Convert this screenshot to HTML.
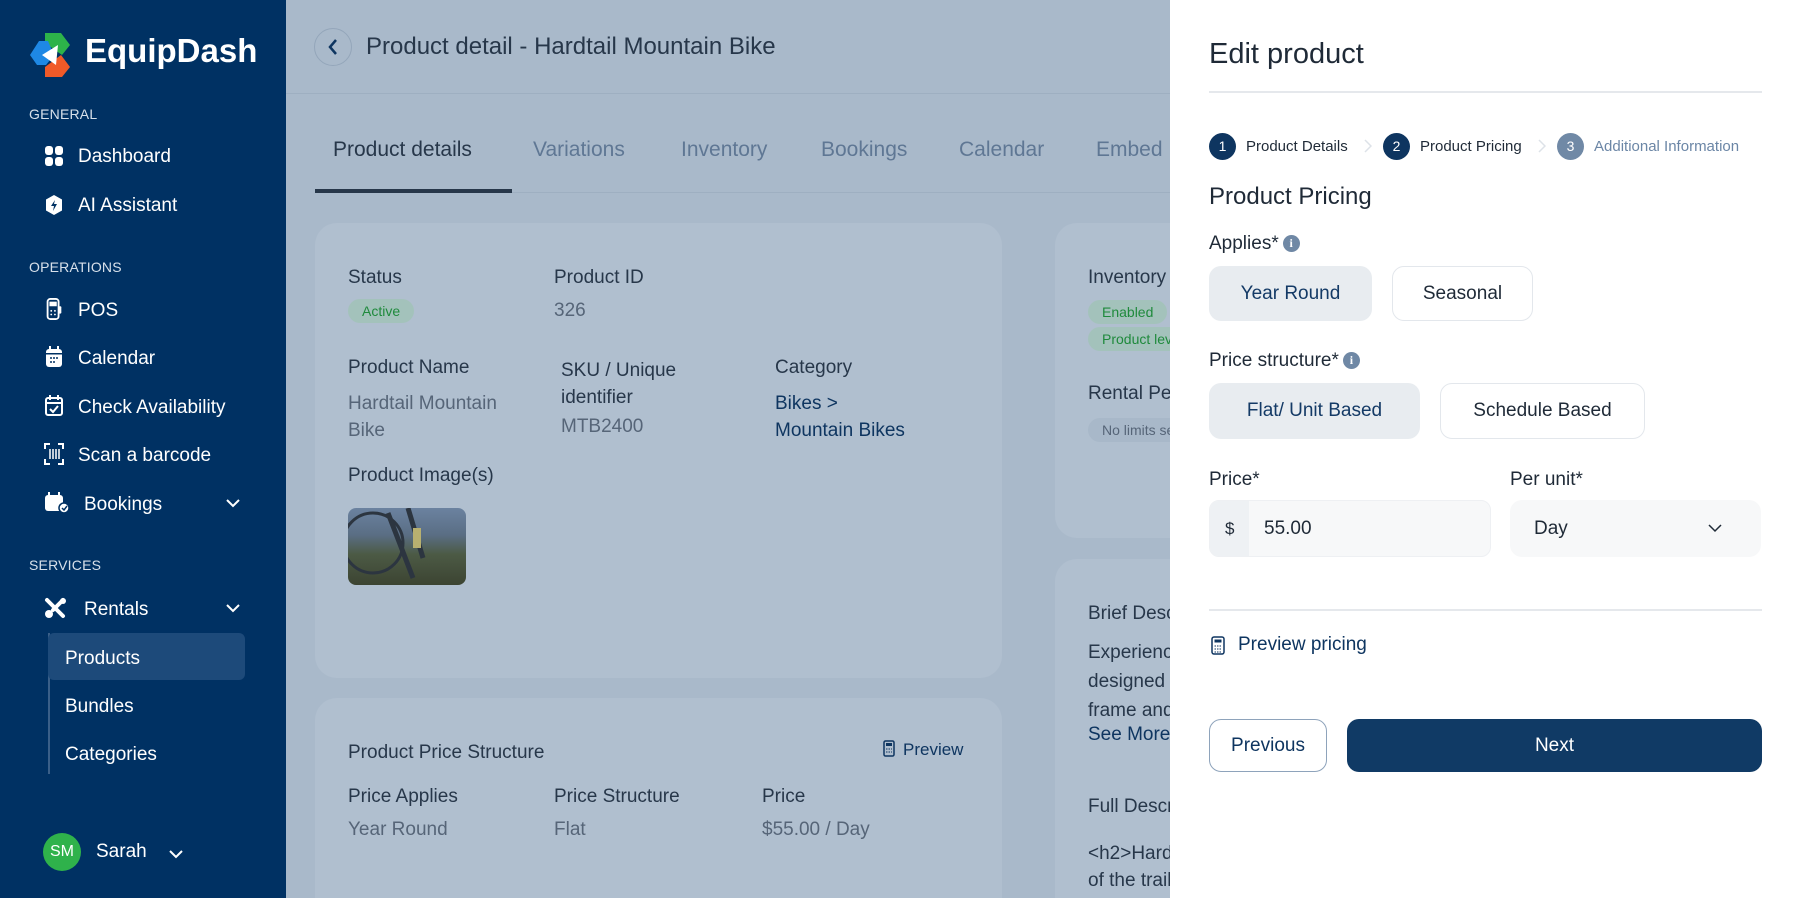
<!DOCTYPE html>
<html><head><meta charset="utf-8"><style>
*{box-sizing:border-box;margin:0;padding:0}
html{width:1800px;height:898px;overflow:hidden}
body{width:1800px;height:898px;overflow:hidden;font-family:"Liberation Sans",sans-serif;background:#a9b9ca;position:relative}
.abs{position:absolute;white-space:nowrap}
#sb{position:absolute;left:0;top:0;width:286px;height:898px;background:#003163;color:#fff}
.sec{position:absolute;left:29px;font-size:14px;color:#d7e0ea;letter-spacing:.2px}
.it{position:absolute;left:78px;font-size:19px;color:#fff}
.ic{position:absolute;left:44px;width:20px;height:22px}
#main{position:absolute;left:286px;top:0;width:884px;height:898px;color:#27374a;overflow:hidden}
.card{position:absolute;background:#b0bfcf;border-radius:22px}
.l{position:absolute;font-size:19px;color:#27374a;white-space:nowrap}
.v{position:absolute;font-size:19px;color:#566578;white-space:nowrap}
.tab{position:absolute;top:138px;font-size:21px;color:#5f7794}
.pill{position:absolute;background:#a3c2bb;color:#1f8a3c;font-size:14px;border-radius:12px;padding:4px 14px;white-space:nowrap}
#pn{position:absolute;left:1170px;top:0;width:630px;height:898px;background:#fff;color:#1f2a37}
.btn{position:absolute;border-radius:12px;font-size:19px;display:flex;align-items:center;justify-content:center}
.sel{background:#e8ecf0;color:#143a66}
.uns{background:#fff;border:1px solid #e3e7ec;color:#1f2a37}
.lab{position:absolute;font-size:19px;color:#1f2a37}
.info{display:inline-block;width:17px;height:17px;border-radius:50%;background:#6f88a5;color:#fff;font-size:12px;text-align:center;line-height:17px;font-weight:bold;vertical-align:2px;margin-left:4px;font-family:"Liberation Serif",serif}
.step{position:absolute;top:133px;width:27px;height:27px;border-radius:50%;background:#0e3560;color:#fff;font-size:14px;text-align:center;line-height:27px}
.stl{position:absolute;top:138px;font-size:15px;color:#1f2a37}
</style></head><body>
<div id="sb">
 <svg class="abs" style="left:28px;top:31px" width="46" height="48" viewBox="0 0 46 48"><polygon points="17,2 33,2 42,14 34,24 17,12" fill="#2db34a"/><polygon points="2,24 11,10 20,10 26,24 18,34 9,34" fill="#1e88e5"/><polygon points="17,36 33,24 42,36 34,46 17,46" fill="#f05a28"/><polygon points="14,24 30,14 28,34" fill="#fff"/></svg>
 <div class="abs" style="left:85px;top:32px;font-size:33px;font-weight:bold;color:#fff">EquipDash</div>
 <div class="sec" style="top:106px">GENERAL</div>
 <svg class="ic" style="top:145px" viewBox="0 0 20 22"><rect x="1" y="1" width="8" height="9" rx="3" fill="#fff"/><rect x="11" y="1" width="8" height="9" rx="3" fill="#fff"/><rect x="1" y="12" width="8" height="9" rx="3" fill="#fff"/><rect x="11" y="12" width="8" height="9" rx="3" fill="#fff"/></svg>
 <div class="it" style="top:146px">Dashboard</div>
 <svg class="ic" style="top:194px" viewBox="0 0 20 22"><polygon points="10,1 18,5.5 18,16.5 10,21 2,16.5 2,5.5" fill="#fff"/><path d="M11 6 L7 12 L10 12 L9 17 L13 10 L10 10Z" fill="#003163"/></svg>
 <div class="it" style="top:195px">AI Assistant</div>
 <div class="sec" style="top:259px">OPERATIONS</div>
 <svg class="ic" style="top:298px" viewBox="0 0 20 24"><rect x="3" y="1" width="12" height="22" rx="3" fill="none" stroke="#fff" stroke-width="2"/><rect x="5" y="4" width="8" height="5" fill="#fff"/><rect x="15" y="9" width="3" height="8" rx="1" fill="#fff"/><circle cx="7" cy="14" r="1" fill="#fff"/><circle cx="11" cy="14" r="1" fill="#fff"/><circle cx="7" cy="18" r="1" fill="#fff"/><circle cx="11" cy="18" r="1" fill="#fff"/></svg>
 <div class="it" style="top:300px">POS</div>
 <svg class="ic" style="top:346px" viewBox="0 0 20 22"><rect x="2" y="3" width="16" height="18" rx="3" fill="#fff"/><rect x="5" y="0" width="2" height="5" fill="#fff"/><rect x="13" y="0" width="2" height="5" fill="#fff"/><rect x="2" y="7" width="16" height="1.5" fill="#003163"/><circle cx="7" cy="12" r="1" fill="#003163"/><circle cx="10" cy="12" r="1" fill="#003163"/><circle cx="13" cy="12" r="1" fill="#003163"/><circle cx="7" cy="16" r="1" fill="#003163"/><circle cx="10" cy="16" r="1" fill="#003163"/></svg>
 <div class="it" style="top:348px">Calendar</div>
 <svg class="ic" style="top:395px" viewBox="0 0 20 22"><rect x="2" y="3" width="16" height="17" rx="2" fill="none" stroke="#fff" stroke-width="2"/><rect x="5" y="0" width="2" height="5" fill="#fff"/><rect x="13" y="0" width="2" height="5" fill="#fff"/><path d="M2 8H18" stroke="#fff" stroke-width="2"/><path d="M6 14 L9 17 L14 11" stroke="#fff" stroke-width="2" fill="none"/></svg>
 <div class="it" style="top:397px">Check Availability</div>
 <svg class="ic" style="top:443px" viewBox="0 0 20 22"><path d="M1 6V1H6M14 1H19V6M19 16V21H14M6 21H1V16" stroke="#fff" stroke-width="2" fill="none"/><path d="M6 6V16M9 6V16M12 6V16M15 6V16" stroke="#fff" stroke-width="1.5"/></svg>
 <div class="it" style="top:445px">Scan a barcode</div>
 <svg class="ic" style="top:492px;width:26px" viewBox="0 0 26 22"><rect x="1" y="3" width="18" height="16" rx="3" fill="#fff"/><rect x="4" y="0" width="2" height="5" fill="#fff"/><rect x="14" y="0" width="2" height="5" fill="#fff"/><circle cx="20" cy="16" r="5" fill="#fff" stroke="#003163" stroke-width="1.5"/><path d="M18 16 L20 18 L23 14" stroke="#003163" stroke-width="1.5" fill="none"/></svg>
 <div class="it" style="top:494px;left:84px">Bookings</div>
 <svg class="abs" style="left:226px;top:498px" width="14" height="10" viewBox="0 0 14 10"><path d="M1 2 L7 8 L13 2" stroke="#fff" stroke-width="2" fill="none"/></svg>
 <div class="sec" style="top:557px">SERVICES</div>
 <svg class="ic" style="top:597px;width:24px" viewBox="0 0 24 22"><path d="M3 3 L19 19" stroke="#fff" stroke-width="4" stroke-linecap="round"/><path d="M19 3 L9 13" stroke="#fff" stroke-width="4" stroke-linecap="round"/><circle cx="5" cy="17" r="4" fill="#fff"/><circle cx="19" cy="4" r="3" fill="#fff"/></svg>
 <div class="it" style="top:599px;left:84px">Rentals</div>
 <svg class="abs" style="left:226px;top:603px" width="14" height="10" viewBox="0 0 14 10"><path d="M1 2 L7 8 L13 2" stroke="#fff" stroke-width="2" fill="none"/></svg>
 <div class="abs" style="left:48px;top:633px;width:2px;height:141px;background:#3a5f88"></div>
 <div class="abs" style="left:48px;top:633px;width:197px;height:47px;background:#1d4a7a;border-radius:6px"></div>
 <div class="it" style="top:648px;left:65px">Products</div>
 <div class="it" style="top:696px;left:65px">Bundles</div>
 <div class="it" style="top:744px;left:65px">Categories</div>
 <div class="abs" style="left:43px;top:833px;width:38px;height:38px;border-radius:50%;background:#2fb24b;color:#fff;font-size:16px;text-align:center;line-height:38px">SM</div>
 <div class="it" style="top:841px;left:96px">Sarah</div>
 <svg class="abs" style="left:169px;top:849px" width="14" height="10" viewBox="0 0 14 10"><path d="M1 2 L7 8 L13 2" stroke="#fff" stroke-width="2" fill="none"/></svg>
</div>
<div id="main">
 <div class="abs" style="left:28px;top:28px;width:38px;height:38px;border-radius:50%;border:1px solid #94a6ba"></div>
 <svg class="abs" style="left:41px;top:38px" width="12" height="18" viewBox="0 0 12 18"><path d="M9 2 L3 9 L9 16" stroke="#0e3560" stroke-width="2.5" fill="none"/></svg>
 <div class="abs" style="left:80px;top:33px;font-size:24px;color:#27374a">Product detail - Hardtail Mountain Bike</div>
 <div class="abs" style="left:0;top:93px;width:884px;height:1px;background:#9eafc1"></div>
 <div class="tab" style="left:47px;color:#27374a">Product details</div>
 <div class="tab" style="left:247px">Variations</div>
 <div class="tab" style="left:395px">Inventory</div>
 <div class="tab" style="left:535px">Bookings</div>
 <div class="tab" style="left:673px">Calendar</div>
 <div class="tab" style="left:810px">Embed</div>
 <div class="abs" style="left:29px;top:192px;width:855px;height:1px;background:#9eafc1"></div>
 <div class="abs" style="left:29px;top:189px;width:197px;height:4px;background:#27374a"></div>
 <div class="card" style="left:29px;top:223px;width:687px;height:455px"></div>
 <div class="card" style="left:29px;top:698px;width:687px;height:200px;border-radius:22px 22px 0 0"></div>
 <div class="card" style="left:769px;top:223px;width:200px;height:315px"></div>
 <div class="card" style="left:769px;top:559px;width:200px;height:339px;border-radius:22px 22px 0 0"></div>
 <div class="l" style="left:62px;top:267px">Status</div>
 <div class="pill" style="left:62px;top:299px">Active</div>
 <div class="l" style="left:268px;top:267px">Product ID</div>
 <div class="v" style="left:268px;top:300px">326</div>
 <div class="l" style="left:62px;top:357px">Product Name</div>
 <div class="v" style="left:62px;top:390px;line-height:27px">Hardtail Mountain<br>Bike</div>
 <div class="l" style="left:275px;top:357px;line-height:27px">SKU / Unique<br>identifier</div>
 <div class="v" style="left:275px;top:416px">MTB2400</div>
 <div class="l" style="left:489px;top:357px">Category</div>
 <div class="v" style="left:489px;top:390px;line-height:27px;color:#0e3560">Bikes &gt;<br>Mountain Bikes</div>
 <div class="l" style="left:62px;top:465px">Product Image(s)</div>
 <div class="abs" style="left:62px;top:508px;width:118px;height:77px;border-radius:8px;background:linear-gradient(180deg,#6b82a0 0%,#5a6e84 35%,#4c5a45 60%,#3c4432 100%);overflow:hidden"><svg width="118" height="77"><circle cx="25" cy="35" r="30" stroke="#2c3540" stroke-width="3" fill="none"/><path d="M40 5 L65 70 M60 0 L75 50" stroke="#2c3540" stroke-width="5"/><rect x="65" y="20" width="8" height="20" fill="#b8b070"/></svg></div>
 <div class="l" style="left:62px;top:742px">Product Price Structure</div>
 <svg class="abs" style="left:597px;top:740px" width="12" height="17" viewBox="0 0 12 17"><rect x="1" y="1" width="10" height="15" rx="1.5" fill="none" stroke="#0e3560" stroke-width="1.5"/><rect x="3" y="3" width="6" height="3" fill="#0e3560"/><path d="M3 9h6M3 12h6" stroke="#0e3560" stroke-dasharray="1.5 1"/></svg>
 <div class="abs" style="left:617px;top:740px;font-size:17px;color:#0e3560">Preview</div>
 <div class="l" style="left:62px;top:786px">Price Applies</div>
 <div class="v" style="left:62px;top:819px">Year Round</div>
 <div class="l" style="left:268px;top:786px">Price Structure</div>
 <div class="v" style="left:268px;top:819px">Flat</div>
 <div class="l" style="left:476px;top:786px">Price</div>
 <div class="v" style="left:476px;top:819px">$55.00 / Day</div>
 <div class="l" style="left:802px;top:267px">Inventory</div>
 <div class="pill" style="left:802px;top:300px">Enabled</div>
 <div class="pill" style="left:802px;top:327px">Product level</div>
 <div class="l" style="left:802px;top:383px">Rental Period</div>
 <div class="pill" style="left:802px;top:418px;background:#a8b8c9;color:#566578">No limits set</div>
 <div class="l" style="left:802px;top:603px">Brief Description</div>
 <div class="l" style="left:802px;top:638px;line-height:29px">Experience<br>designed<br>frame and</div>
 <div class="l" style="left:802px;top:724px;color:#0e3560">See More</div>
 <div class="l" style="left:802px;top:796px">Full Description</div>
 <div class="l" style="left:802px;top:840px;line-height:27px">&lt;h2&gt;Hardtail<br>of the trail</div>
</div>
<div id="pn">
 <div class="abs" style="left:39px;top:38px;font-size:29px;color:#1f2a37">Edit product</div>
 <div class="abs" style="left:39px;top:91px;width:553px;height:2px;background:#e5e8ec"></div>
 <div class="step" style="left:39px">1</div><div class="stl" style="left:76px">Product Details</div>
 <svg class="abs" style="left:194px;top:139px" width="8" height="14"><path d="M1 1 L7 7 L1 13" stroke="#dde2e8" stroke-width="1.5" fill="none"/></svg>
 <div class="step" style="left:213px">2</div><div class="stl" style="left:250px">Product Pricing</div>
 <svg class="abs" style="left:368px;top:139px" width="8" height="14"><path d="M1 1 L7 7 L1 13" stroke="#dde2e8" stroke-width="1.5" fill="none"/></svg>
 <div class="step" style="left:387px;background:#7089a6">3</div><div class="stl" style="left:424px;color:#6b86a6">Additional Information</div>
 <div class="abs" style="left:39px;top:183px;font-size:24px;color:#1f2a37">Product Pricing</div>
 <div class="lab" style="left:39px;top:233px">Applies*<span class="info">i</span></div>
 <div class="btn sel" style="left:39px;top:266px;width:163px;height:55px">Year Round</div>
 <div class="btn uns" style="left:222px;top:266px;width:141px;height:55px">Seasonal</div>
 <div class="lab" style="left:39px;top:350px">Price structure*<span class="info">i</span></div>
 <div class="btn sel" style="left:39px;top:383px;width:211px;height:56px">Flat/ Unit Based</div>
 <div class="btn uns" style="left:270px;top:383px;width:205px;height:56px">Schedule Based</div>
 <div class="lab" style="left:39px;top:469px">Price*</div>
 <div class="lab" style="left:340px;top:469px">Per unit*</div>
 <div class="abs" style="left:39px;top:500px;width:282px;height:57px;border-radius:10px;background:#f7f8f9;border:1px solid #eef0f3;overflow:hidden"><div style="position:absolute;left:0;top:0;width:39px;height:57px;background:#eef1f4"></div><div style="position:absolute;left:15px;top:18px;font-size:17px">$</div><div style="position:absolute;left:54px;top:17px;font-size:19px">55.00</div></div>
 <div class="abs" style="left:340px;top:500px;width:251px;height:57px;border-radius:12px;background:#f7f8f9"><div style="position:absolute;left:24px;top:18px;font-size:19px">Day</div><svg style="position:absolute;left:198px;top:24px" width="14" height="9"><path d="M1 1 L7 7 L13 1" stroke="#1f2a37" stroke-width="1.5" fill="none"/></svg></div>
 <div class="abs" style="left:39px;top:609px;width:553px;height:2px;background:#e5e8ec"></div>
 <svg class="abs" style="left:41px;top:636px" width="14" height="19" viewBox="0 0 14 19"><rect x="1" y="1" width="12" height="17" rx="2" fill="none" stroke="#0e3560" stroke-width="1.5"/><rect x="3.5" y="3.5" width="7" height="3" fill="#0e3560"/><path d="M3.5 10h7M3.5 13h7M3.5 16h7" stroke="#0e3560" stroke-dasharray="1.5 1"/></svg>
 <div class="abs" style="left:68px;top:634px;font-size:19px;color:#0e3560">Preview pricing</div>
 <div class="btn" style="left:39px;top:719px;width:118px;height:53px;border:1.5px solid #8ea3bb;color:#0e3560">Previous</div>
 <div class="btn" style="left:177px;top:719px;width:415px;height:53px;background:#103a65;color:#fff">Next</div>
</div>
</body></html>
